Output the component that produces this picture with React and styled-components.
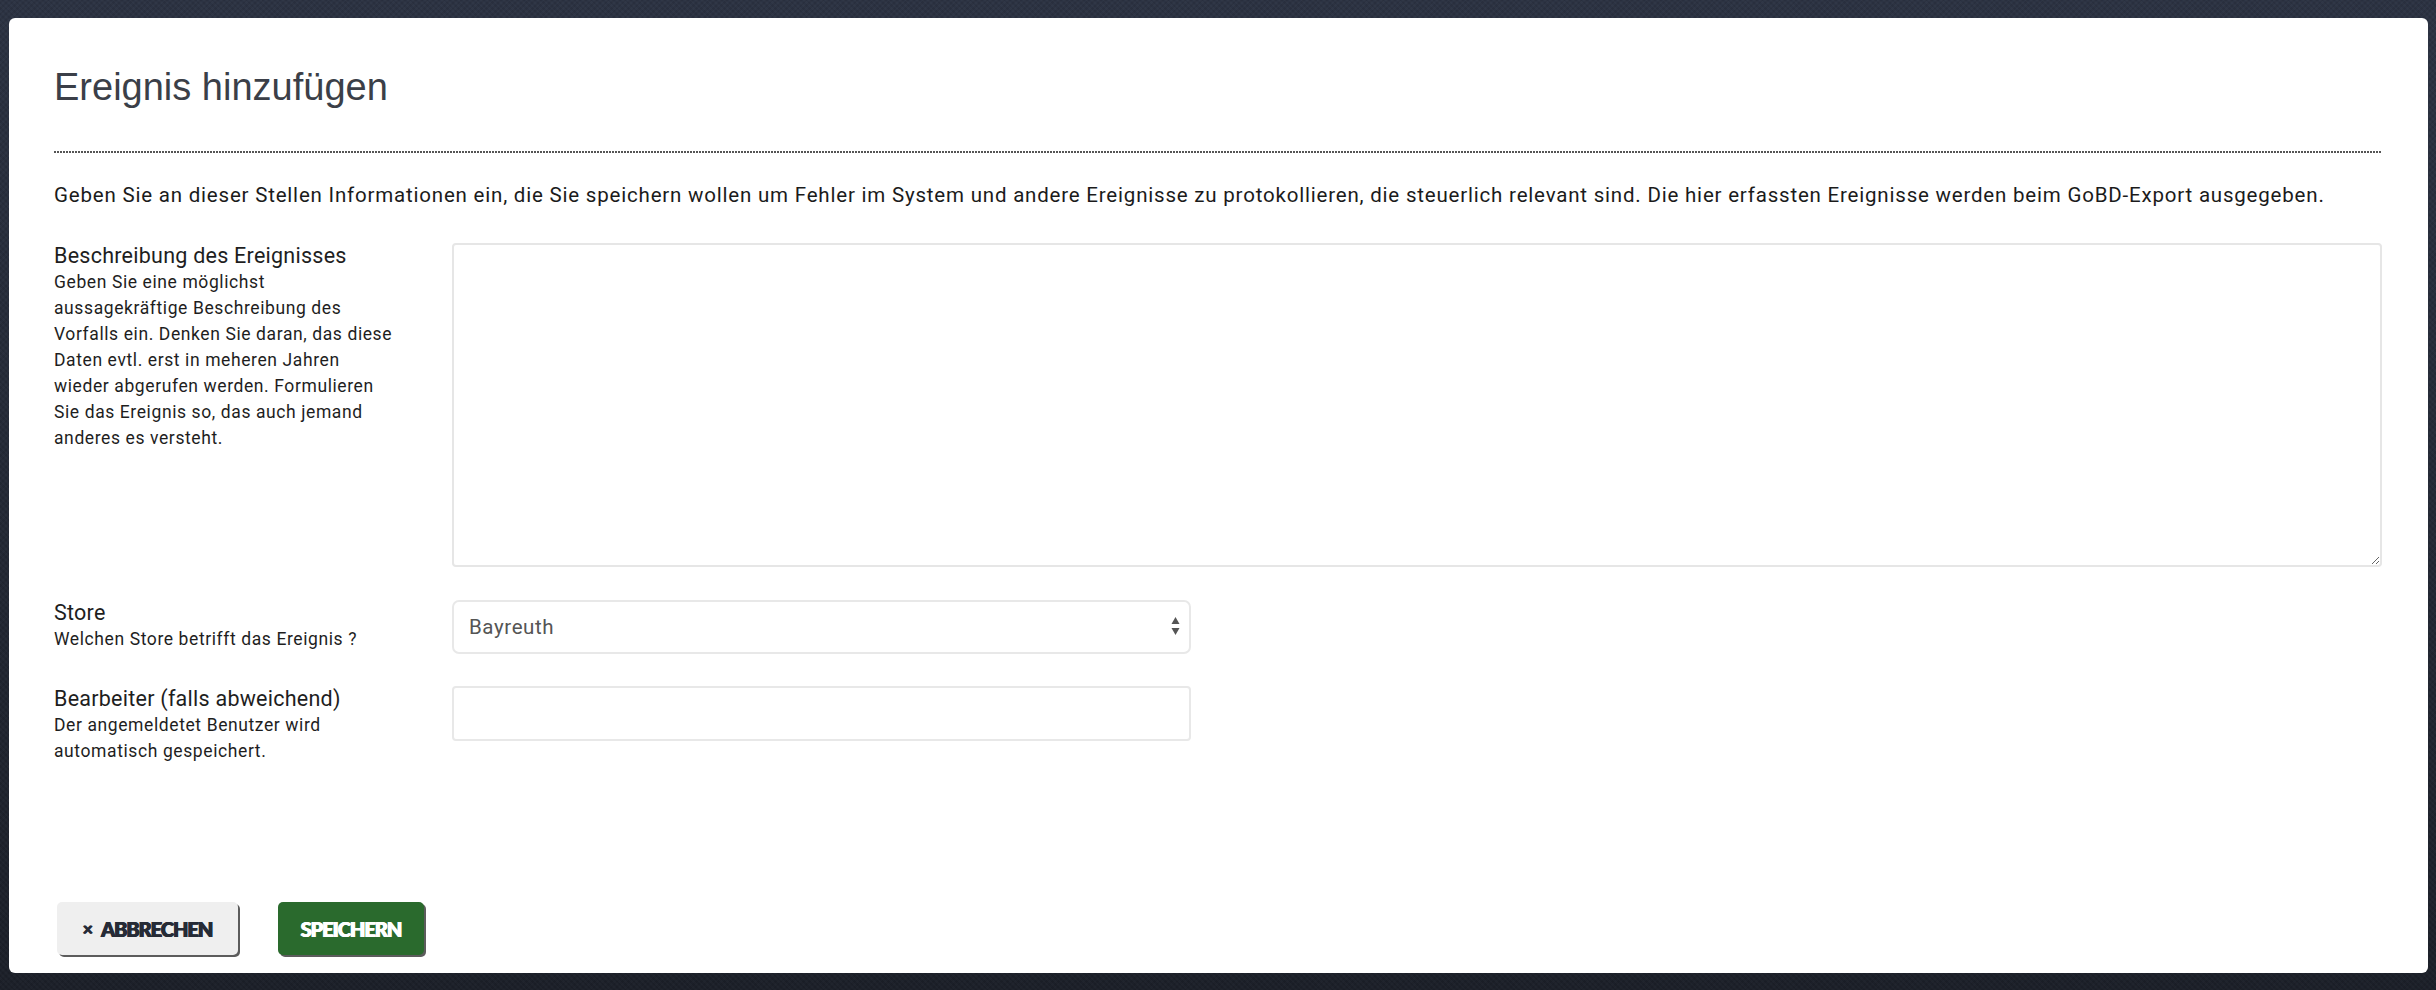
import React from 'react'
import styled, { createGlobalStyle } from 'styled-components'

const GlobalStyle = createGlobalStyle`
  html, body {
    margin: 0;
    padding: 0;
  }
  body {
    min-height: 990px;
    background-color: #242a37;
    background-image:
      repeating-linear-gradient(45deg, rgba(255, 255, 255, 0.018) 0 2px, transparent 2px 4px),
      repeating-linear-gradient(-45deg, rgba(0, 0, 0, 0.08) 0 2px, transparent 2px 4px),
      linear-gradient(#2c3343, #1c2029);
    font-family: Roboto, "Noto Sans", sans-serif;
  }
`

const Backdrop = styled.div`
  padding: 18px 8px 18px 9px;
`

const Modal = styled.div`
  background: #fff;
  border-radius: 6px;
  padding: 0 46px 18px 45px;
`

const Header = styled.div`
  padding: 48px 0 43px;
`

const Title = styled.h1`
  margin: 0;
  font-family: "Liberation Sans", Arial, sans-serif;
  font-weight: 400;
  font-size: 38px;
  line-height: 42px;
  color: #3b3f48;
`

const DottedRule = styled.div`
  height: 2px;
  background: repeating-linear-gradient(to right, #555 0 2px, transparent 2px 3px);
`

const Intro = styled.p`
  margin: 27px 0 33px;
  font-size: 20.5px;
  line-height: 30px;
  letter-spacing: 0.8px;
  color: #1b1b1b;
`

const FormRow = styled.div`
  display: grid;
  grid-template-columns: 398px 1fr;
  margin-bottom: ${p => p.$gap || 0}px;
`

const LabelBox = styled.div`
  display: flex;
  flex-direction: column;
`

const Label = styled.label`
  font-size: 21.5px;
  line-height: 26px;
  letter-spacing: 0.25px;
  color: #1e1e1e;
`

const Help = styled.span`
  display: block;
  font-size: 17.5px;
  line-height: 26px;
  letter-spacing: 0.6px;
  color: #1e1e1e;
`

const TextArea = styled.textarea`
  display: block;
  box-sizing: border-box;
  width: 100%;
  height: 324px;
  border: 2px solid #e6e6e6;
  border-radius: 4px;
  padding: 10px 14px;
  font-family: Roboto, sans-serif;
  font-size: 20px;
  outline: none;
  resize: vertical;
`

const SelectWrap = styled.div`
  position: relative;
  width: 739px;
`

const Select = styled.select`
  appearance: none;
  display: block;
  box-sizing: border-box;
  width: 100%;
  height: 54px;
  border: 2px solid #e8e8e8;
  border-radius: 7px;
  background: #fff;
  padding: 0 15px;
  font-family: Roboto, sans-serif;
  font-size: 20.5px;
  letter-spacing: 0.6px;
  color: #555;
  outline: none;
`

const Arrows = styled.svg`
  position: absolute;
  right: 11px;
  top: 16px;
  pointer-events: none;
`

const Input = styled.input`
  display: block;
  box-sizing: border-box;
  width: 739px;
  height: 55px;
  border: 2px solid #e8e8e8;
  border-radius: 4px;
  padding: 0 15px;
  font-family: Roboto, sans-serif;
  font-size: 20px;
  outline: none;
`

const Footer = styled.div`
  display: flex;
  gap: 40px;
  margin-top: 138px;
  padding-left: 3px;
`

const Button = styled.button`
  box-sizing: border-box;
  width: ${p => p.$width}px;
  height: 53px;
  border: none;
  border-radius: 5px;
  background: ${p => (p.$primary ? '#2a6a2d' : '#efefef')};
  color: ${p => (p.$primary ? '#fff' : '#262b36')};
  box-shadow: 2px 2px 0 #5c5c5c;
  font-family: Lato, Roboto, sans-serif;
  font-weight: 900;
  font-size: 20px;
  letter-spacing: -1px;
  text-transform: uppercase;
  text-shadow: 0.6px 0 0 currentColor, -0.6px 0 0 currentColor;
  display: flex;
  align-items: center;
  justify-content: center;
  gap: 9px;
  cursor: pointer;
`

const Cross = styled.span`
  font-size: 18px;
  font-weight: 700;
`

function HelpLines({ lines }) {
  return lines.map(line => <Help key={line}>{line}</Help>)
}

export default function App() {
  return (
    <>
      <GlobalStyle />
      <Backdrop>
        <Modal>
          <Header>
            <Title>Ereignis hinzufügen</Title>
          </Header>
          <DottedRule />
          <Intro>
            Geben Sie an dieser Stellen Informationen ein, die Sie speichern wollen um Fehler im System und andere
            Ereignisse zu protokollieren, die steuerlich relevant sind. Die hier erfassten Ereignisse werden beim
            GoBD-Export ausgegeben.
          </Intro>

          <FormRow $gap={33}>
            <LabelBox>
              <Label>Beschreibung des Ereignisses</Label>
              <HelpLines
                lines={[
                  'Geben Sie eine möglichst',
                  'aussagekräftige Beschreibung des',
                  'Vorfalls ein. Denken Sie daran, das diese',
                  'Daten evtl. erst in meheren Jahren',
                  'wieder abgerufen werden. Formulieren',
                  'Sie das Ereignis so, das auch jemand',
                  'anderes es versteht.',
                ]}
              />
            </LabelBox>
            <div>
              <TextArea />
            </div>
          </FormRow>

          <FormRow $gap={32}>
            <LabelBox>
              <Label>Store</Label>
              <Help>Welchen Store betrifft das Ereignis ?</Help>
            </LabelBox>
            <div>
              <SelectWrap>
                <Select defaultValue="Bayreuth">
                  <option>Bayreuth</option>
                </Select>
                <Arrows width="9" height="20" viewBox="0 0 9 20">
                  <path d="M4.5 1 L8.5 8 L0.5 8 Z" fill="#555" />
                  <path d="M0.5 12 L8.5 12 L4.5 19 Z" fill="#555" />
                </Arrows>
              </SelectWrap>
            </div>
          </FormRow>

          <FormRow>
            <LabelBox>
              <Label>Bearbeiter (falls abweichend)</Label>
              <HelpLines lines={['Der angemeldetet Benutzer wird', 'automatisch gespeichert.']} />
            </LabelBox>
            <div>
              <Input type="text" />
            </div>
          </FormRow>

          <Footer>
            <Button $width={181}>
              <Cross>×</Cross>Abbrechen
            </Button>
            <Button $width={146} $primary>
              Speichern
            </Button>
          </Footer>
        </Modal>
      </Backdrop>
    </>
  )
}
